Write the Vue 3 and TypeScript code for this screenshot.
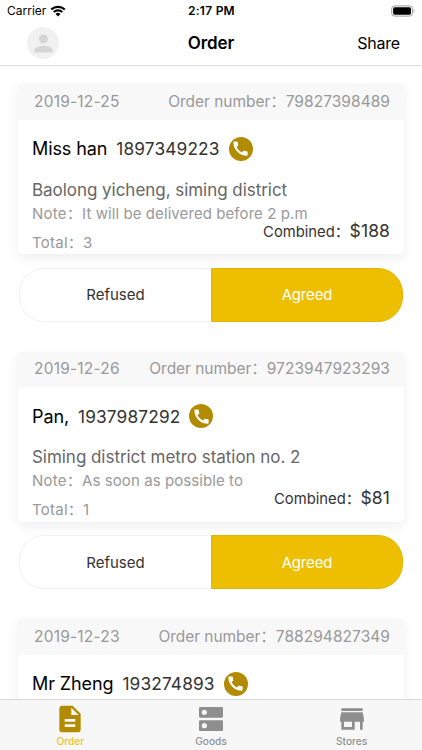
<script setup lang="ts">
interface Order {
  date: string
  number: string
  name: string
  phone: string
  detail?: {
    address: string
    note: string
    total: number
    price: string
  }
}

const orders: Order[] = [
  {
    date: '2019-12-25',
    number: '79827398489',
    name: 'Miss han',
    phone: '1897349223',
    detail: {
      address: 'Baolong yicheng, siming district',
      note: 'It will be delivered before 2 p.m',
      total: 3,
      price: '$188',
    },
  },
  {
    date: '2019-12-26',
    number: '9723947923293',
    name: 'Pan,',
    phone: '1937987292',
    detail: {
      address: 'Siming district metro station no. 2',
      note: 'As soon as possible to',
      total: 1,
      price: '$81',
    },
  },
  {
    date: '2019-12-23',
    number: '788294827349',
    name: 'Mr Zheng',
    phone: '193274893',
  },
]

const tabs = [
  { label: 'Order', icon: 'M14 2H6c-1.1 0-1.99.9-1.99 2L4 20c0 1.1.89 2 1.99 2H18c1.1 0 2-.9 2-2V8l-6-6zm2 16H8v-2h8v2zm0-4H8v-2h8v2zm-3-5V3.5L18.5 9H13z' },
  { label: 'Goods', icon: 'M20 13H4c-.55 0-1 .45-1 1v6c0 .55.45 1 1 1h16c.55 0 1-.45 1-1v-6c0-.55-.45-1-1-1zM7 19c-1.1 0-2-.9-2-2s.9-2 2-2 2 .9 2 2-.9 2-2 2zM20 3H4c-.55 0-1 .45-1 1v6c0 .55.45 1 1 1h16c.55 0 1-.45 1-1V4c0-.55-.45-1-1-1zM7 9c-1.1 0-2-.9-2-2s.9-2 2-2 2 .9 2 2-.9 2-2 2z' },
  { label: 'Stores', icon: 'M20 4H4v2h16V4zm1 10v-2l-1-5H4l-1 5v2h1v6h10v-6h4v6h2v-6h1zm-9 4H6v-4h6v4z' },
]
</script>

<template>
  <div class="screen">
    <header class="top">
      <div class="status">
        <div class="carrier">
          <span>Carrier</span>
          <svg class="wifi" viewBox="0 0 16 12">
            <path d="M1.2 4.6a9.8 9.8 0 0 1 13.6 0" />
            <path d="M3.7 7.1a6.2 6.2 0 0 1 8.6 0" />
            <path class="dot" d="M8 11.4 5.5 8.9a3.6 3.6 0 0 1 5 0z" />
          </svg>
        </div>
        <span class="clock">2:17 PM</span>
        <svg class="battery" viewBox="0 0 26 12">
          <rect class="shell" x=".7" y=".7" width="21.6" height="10.6" rx="3" />
          <rect x="2.2" y="2.2" width="18.6" height="7.6" rx="1.6" />
          <path class="cap" d="M23.6 4v4c1.2-.5 1.2-3.5 0-4z" />
        </svg>
      </div>
      <nav class="bar">
        <div class="avatar">
          <svg viewBox="0 0 24 24"><path d="M12 12c2.21 0 4-1.79 4-4s-1.79-4-4-4-4 1.79-4 4 1.79 4 4 4zm0 2c-2.67 0-8 1.34-8 4v2h16v-2c0-2.66-5.33-4-8-4z" /></svg>
        </div>
        <h1>Order</h1>
        <span class="share">Share</span>
      </nav>
    </header>

    <main class="list">
      <section v-for="order in orders" :key="order.number" class="order">
        <article class="card">
          <div class="head">
            <span class="date">{{ order.date }}</span>
            <span class="number">Order number：<span class="digits">{{ order.number }}</span></span>
          </div>
          <div class="body">
            <div class="contact">
              <span class="name">{{ order.name }}</span>
              <span class="phone">{{ order.phone }}</span>
              <span class="call">
                <svg viewBox="0 0 24 24"><path d="M20.01 15.38c-1.23 0-2.42-.2-3.53-.56-.35-.12-.74-.03-1.01.24l-1.57 1.97c-2.83-1.35-5.48-3.9-6.89-6.83l1.95-1.66c.27-.28.35-.67.24-1.02-.37-1.11-.56-2.3-.56-3.53 0-.54-.45-.99-.99-.99H4.19C3.65 3 3 3.24 3 3.99 3 13.28 10.73 21 20.01 21c.71 0 .99-.63.99-1.18v-3.45c0-.54-.45-.99-.99-.99z" /></svg>
              </span>
            </div>
            <template v-if="order.detail">
              <div class="address">{{ order.detail.address }}</div>
              <div class="note"><span class="label">Note：</span>{{ order.detail.note }}</div>
              <div class="foot">
                <span class="total"><span class="label">Total：</span>{{ order.detail.total }}</span>
                <span class="sum"><span class="combined">Combined：</span><span class="price">{{ order.detail.price }}</span></span>
              </div>
            </template>
          </div>
        </article>
        <div v-if="order.detail" class="actions">
          <button class="refuse">Refused</button>
          <button class="agree">Agreed</button>
        </div>
      </section>
    </main>

    <footer class="tabs">
      <div v-for="(tab, i) in tabs" :key="tab.label" class="tab" :class="{ active: i === 0 }">
        <svg viewBox="0 0 24 24"><path :d="tab.icon" /></svg>
        <span>{{ tab.label }}</span>
      </div>
    </footer>
  </div>
</template>

<style>
body {
  margin: 0;
  overflow: hidden;
}
</style>

<style scoped>
.screen {
  display: flex;
  flex-direction: column;
  width: 422px;
  height: 750px;
  overflow: hidden;
  background: #fff;
  color: #000;
  font-family: Inter, "Noto Sans CJK SC", sans-serif;
  white-space: nowrap;
}
.top {
  flex: none;
  height: 65px;
  border-bottom: 1px solid #dedede;
}
.status {
  display: grid;
  grid-template-columns: 1fr auto 1fr;
  align-items: center;
  height: 21px;
  padding: 0 6px 0 7px;
  font-size: 12px;
}
.carrier {
  display: flex;
  align-items: center;
  gap: 4px;
}
.wifi {
  width: 16px;
  height: 12px;
  fill: none;
  stroke: #000;
  stroke-width: 2.1;
}
.wifi .dot {
  fill: #000;
  stroke: none;
}
.clock {
  font-weight: 600;
  font-size: 12px;
  letter-spacing: .25px;
}
.battery {
  justify-self: end;
  width: 25px;
  height: 12px;
}
.battery .shell {
  fill: none;
  stroke: #999;
  stroke-width: 1;
}
.battery .cap {
  fill: #999;
}
.bar {
  display: grid;
  grid-template-columns: 1fr auto 1fr;
  align-items: center;
  height: 44px;
  padding: 0 22px;
}
.avatar {
  display: flex;
  align-items: center;
  justify-content: center;
  width: 32px;
  height: 32px;
  margin-left: 5px;
  border-radius: 50%;
  background: #f1f1f1;
}
.avatar svg {
  width: 27px;
  height: 27px;
  fill: #d5d5d5;
}
h1 {
  margin: 0;
  font-size: 17px;
  font-weight: 600;
  letter-spacing: -.1px;
}
.share {
  justify-self: end;
  font-size: 16px;
  letter-spacing: -.2px;
}
.list {
  flex: 1;
  min-height: 0;
  overflow: hidden;
  padding: 18px 18px 0;
}
.order {
  height: 267.5px;
}
.card {
  height: 170px;
  border-radius: 4px;
  background: #fff;
  box-shadow: 0 4px 12px rgba(0, 0, 0, .07);
  overflow: hidden;
}
.head {
  display: flex;
  align-items: center;
  justify-content: space-between;
  height: 35.5px;
  padding: 0 14px 0 16px;
  background: #f8f8f8;
  color: #999;
  font-size: 15.5px;
  line-height: 20px;
}
.date {
  letter-spacing: .2px;
}
.number {
  height: 20px;
  letter-spacing: -.04px;
}
.digits {
  letter-spacing: .05px;
}
.body {
  padding: 0 14px;
}
.contact {
  display: flex;
  align-items: center;
  height: 58px;
  font-size: 18px;
}
.name {
  letter-spacing: -.1px;
}
.phone {
  margin-left: 9px;
  color: #333;
  font-size: 17.3px;
  letter-spacing: .14px;
}
.call {
  display: flex;
  align-items: center;
  justify-content: center;
  width: 24px;
  height: 24px;
  margin-left: 9px;
  border-radius: 50%;
  background: #b38b00;
}
.call svg {
  width: 19px;
  height: 19px;
  fill: #fff;
}
.address {
  height: 24px;
  line-height: 24px;
  color: #666;
  font-size: 17px;
  letter-spacing: -.04px;
}
.note {
  height: 24px;
  line-height: 24px;
  color: #999;
  font-size: 15px;
  letter-spacing: .08px;
}
.label {
  letter-spacing: .25px;
}
.foot {
  display: flex;
  justify-content: space-between;
  height: 28px;
}
.total {
  padding-top: 5px;
  line-height: 24px;
  color: #999;
  font-size: 15px;
}
.sum {
  display: flex;
  align-items: baseline;
  height: 24px;
  margin-top: -7px;
  line-height: 24px;
  color: #333;
}
.combined {
  font-size: 14.8px;
}
.price {
  font-size: 17.5px;
  letter-spacing: .1px;
}
.actions {
  display: flex;
  box-sizing: border-box;
  width: 384px;
  height: 54px;
  margin: 13.5px 0 0 1px;
}
.actions button {
  box-sizing: border-box;
  padding: 0;
  font-family: inherit;
  font-size: 15px;
}
.refuse {
  width: 192px;
  border: 1px solid #f0f0f0;
  border-right: 0;
  border-radius: 25px 0 0 25px;
  background: #fff;
  color: #333;
}
.agree {
  width: 192px;
  border: 1px solid #e2b600;
  border-radius: 0 25px 25px 0;
  background: #edbf00;
  color: #fff;
  letter-spacing: -.15px;
}
.tabs {
  display: grid;
  grid-template-columns: repeat(3, 1fr);
  flex: none;
  box-sizing: border-box;
  height: 51px;
  border-top: 1px solid #d8d8d8;
  background: #f7f7f7;
}
.tab {
  display: flex;
  flex-direction: column;
  align-items: center;
  padding-top: 3px;
  color: #929292;
  font-size: 10.2px;
  font-weight: 500;
  line-height: 13px;
}
.tab svg {
  width: 32px;
  height: 32px;
  fill: #8e8e8e;
}
.tab.active {
  color: #efc32e;
}
.tab.active svg {
  fill: #b38b00;
}
</style>
